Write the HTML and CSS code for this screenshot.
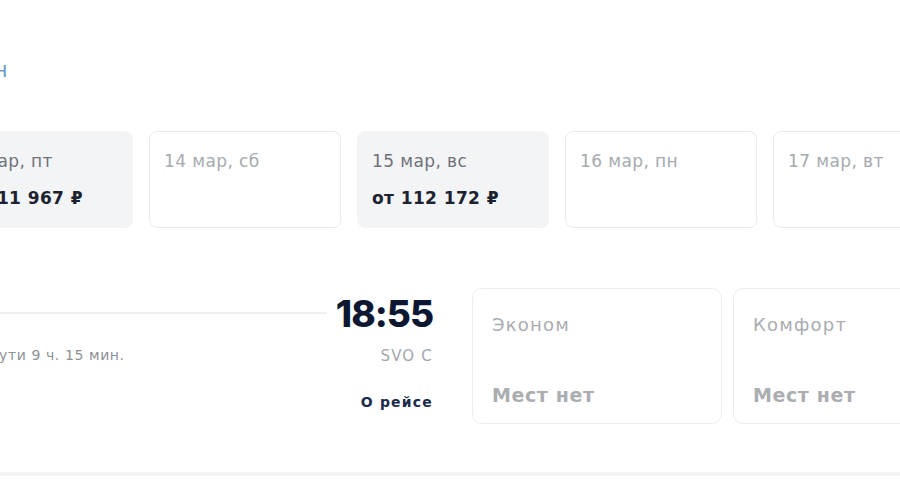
FILE: index.html
```html
<!DOCTYPE html>
<html lang="ru">
<head>
<meta charset="utf-8">
<title>Выбор рейса</title>
<link rel="stylesheet" href="styles.css">
</head>
<body>
<div class="page">
  <div class="head"><span class="link">ин</span></div>

  <div class="dates">
    <div class="date active">
      <div class="day">13 мар, пт</div>
      <div class="price">от 111 967 ₽</div>
    </div>
    <div class="date">
      <div class="day">14 мар, сб</div>
    </div>
    <div class="date active">
      <div class="day">15 мар, вс</div>
      <div class="price">от 112 172 ₽</div>
    </div>
    <div class="date">
      <div class="day">16 мар, пн</div>
    </div>
    <div class="date">
      <div class="day">17 мар, вт</div>
    </div>
  </div>

  <div class="flight">
    <div class="route">
      <div class="line"></div>
      <div class="dur">В пути 9 ч. 15 мин.</div>
    </div>
    <div class="arr">
      <div class="time">18:55</div>
      <div class="port">SVO C</div>
      <a class="about" href="#">О рейсе</a>
    </div>
    <div class="fares">
      <div class="fare">
        <div class="cls">Эконом</div>
        <div class="none">Мест нет</div>
      </div>
      <div class="fare">
        <div class="cls">Комфорт</div>
        <div class="none">Мест нет</div>
      </div>
    </div>
  </div>

  <div class="sep"></div>
</div>
</body>
</html>
```

FILE: styles.css
```css
* { box-sizing: border-box; }
html, body { margin: 0; padding: 0; background: #fff; overflow: hidden; }
body {
  font-family: "DejaVu Sans", "Noto Sans", sans-serif;
  color: #0f1a30;
  width: 900px;
  height: 500px;
}
.page { width: 900px; overflow: hidden; }

.head { height: 131px; padding-top: 56px; }
.link {
  display: inline-block;
  margin-left: -21px;
  font-size: 22px;
  line-height: 28px;
  color: #6f9cc9;
}

.dates {
  display: flex;
  gap: 16px;
  margin-left: -59px;
}
.date {
  flex: none;
  width: 192px;
  height: 97px;
  border: 1px solid #e9eaec;
  border-radius: 8px;
  padding: 19px 14px 0;
  background: #fff;
}
.date.active { background: #f3f4f6; border-color: #f3f4f6; }
.day {
  font-size: 17px;
  line-height: 20px;
  color: #a6a9ae;
  letter-spacing: 0.4px;
}
.date.active .day { color: #6f727a; }
.price {
  margin-top: 16px;
  font-size: 17px;
  line-height: 22px;
  font-weight: 700;
  color: #1c2230;
  letter-spacing: 0.4px;
}

.flight {
  display: flex;
  margin-top: 60px;
  height: 136px;
}
.route { flex: none; width: 327px; padding-top: 24px; }
.line { height: 2px; background: #eeeff1; }
.dur {
  margin-top: 32px;
  margin-left: -26px;
  font-size: 14px;
  line-height: 18px;
  color: #8d9096;
  letter-spacing: 0.6px;
}
.arr {
  flex: none;
  width: 106px;
  display: flex;
  flex-direction: column;
  align-items: flex-end;
}
.time {
  margin-top: 5px;
  font-family: Inter, Roboto, sans-serif;
  font-size: 37px;
  line-height: 42px;
  font-weight: 800;
  color: #0c1832;
  letter-spacing: -1px;
}
.port {
  margin-top: 12px;
  font-size: 15px;
  line-height: 18px;
  color: #a3a6ac;
  letter-spacing: 1.2px;
}
.about {
  margin-top: 28px;
  font-size: 14px;
  line-height: 18px;
  font-weight: 700;
  color: #1b2a4c;
  text-decoration: none;
  letter-spacing: 1.2px;
}
.fares {
  flex: none;
  display: flex;
  gap: 11px;
  margin-left: 39px;
}
.fare {
  flex: none;
  width: 250px;
  height: 136px;
  border: 1px solid #eceded;
  border-radius: 10px;
  padding: 25px 19px 0;
  display: flex;
  flex-direction: column;
}
.cls {
  font-size: 18px;
  line-height: 22px;
  color: #aaacb1;
  letter-spacing: 1.2px;
}
.none {
  margin-top: 47px;
  font-size: 19px;
  line-height: 24px;
  font-weight: 700;
  color: #abadb1;
  letter-spacing: 0.6px;
}

.sep {
  margin-top: 48px;
  height: 4px;
  background: #f4f4f5;
}
```
